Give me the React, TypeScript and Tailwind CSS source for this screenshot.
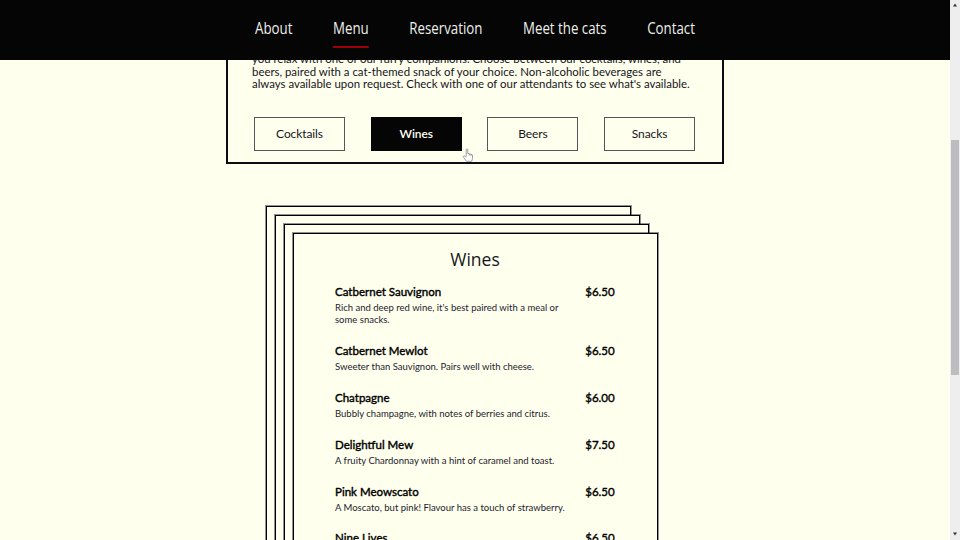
const NAV = ['About', 'Menu', 'Reservation', 'Meet the cats', 'Contact'];
const TABS = ['Cocktails', 'Wines', 'Beers', 'Snacks'];

const WINES = [
  { name: 'Catbernet Sauvignon', price: '$6.50', lines: ["Rich and deep red wine, it's best paired with a meal or", 'some snacks.'] },
  { name: 'Catbernet Mewlot', price: '$6.50', lines: ['Sweeter than Sauvignon. Pairs well with cheese.'] },
  { name: 'Chatpagne', price: '$6.00', lines: ['Bubbly champagne, with notes of berries and citrus.'] },
  { name: 'Delightful Mew', price: '$7.50', lines: ['A fruity Chardonnay with a hint of caramel and toast.'] },
  { name: 'Pink Meowscato', price: '$6.50', lines: ['A Moscato, but pink! Flavour has a touch of strawberry.'] },
  { name: 'Nine Lives', price: '$6.50', lines: [] },
];

function Header() {
  return (
    <header className="absolute left-0 top-0 z-10 flex h-[60px] w-[950px] justify-center bg-[#050505]">
      <nav className="flex w-[530px] shrink-0 scale-x-83 justify-between font-['Open_Sans','Noto_Sans',sans-serif] text-[16px] text-[#efefeb]">
        {NAV.map((item) => (
          <a
            key={item}
            className={`mt-[16px] h-[32px] whitespace-nowrap leading-[24px] ${item === 'Menu' ? 'border-b-2 border-[#9c0009]' : ''}`}
          >
            {item}
          </a>
        ))}
      </nav>
    </header>
  );
}

function Intro() {
  return (
    <section className="ml-[226px] h-[164px] w-[498px] border-2 border-t-0 border-[#0c0c14] pl-[24px] pt-[53px]">
      <p className="origin-left scale-x-95 whitespace-nowrap text-[12px] leading-[12.7px]">
        you relax with one of our furry companions. Choose between our cocktails, wines, and
        <br />
        beers, paired with a cat-themed snack of your choice. Non-alcoholic beverages are
        <br />
        always available upon request. Check with one of our attendants to see what's available.
      </p>
      <div className="ml-[2px] mt-[26px] flex gap-[25.7px]">
        {TABS.map((tab) => (
          <button
            key={tab}
            className={`h-[34px] w-[91px] border text-[12px] leading-[32px] tracking-[-0.1px] ${
              tab === 'Wines' ? 'border-[#050505] bg-[#050505] font-semibold text-[#fffff0]' : 'border-[#55555c]'
            }`}
          >
            {tab}
          </button>
        ))}
      </div>
    </section>
  );
}

function Sheet({ className }: { className: string }) {
  return (
    <div
      className={`absolute h-[500px] w-[365px] border border-black bg-[#ffffee] shadow-[0_0_0_1px_rgba(12,12,40,0.45)] ${className}`}
    />
  );
}

function MenuCard() {
  return (
    <section className="relative ml-[266px] mt-[42px] w-[392px] pl-[27px] pt-[27px]">
      <Sheet className="left-0 top-0" />
      <Sheet className="left-[9px] top-[9px]" />
      <Sheet className="left-[18px] top-[18px]" />
      <div className="relative h-[500px] w-[365px] border border-black bg-[#ffffee] pl-[41px] pr-[42px] pt-[13px] shadow-[0_0_0_1px_rgba(12,12,40,0.45)]">
        <h2 className="text-center font-['Open_Sans',sans-serif] text-[17.5px] leading-[24px]">Wines</h2>
        <ul className="mt-[13.4px]">
          {WINES.map((wine) => (
            <li key={wine.name} className="mb-[18.8px]">
              <div className="flex h-[16px] justify-between text-[12px] leading-[16px] text-black [-webkit-text-stroke:0.4px_black]">
                <span className="origin-left scale-x-96">{wine.name}</span>
                <span className="origin-right scale-x-96">{wine.price}</span>
              </div>
              {wine.lines.map((line) => (
                <p key={line} className="h-[12px] whitespace-nowrap text-[9.5px] leading-[15px] text-[#22222c]">
                  {line}
                </p>
              ))}
            </li>
          ))}
        </ul>
      </div>
    </section>
  );
}

function Scrollbar() {
  return (
    <div className="absolute right-0 top-0 z-20 flex h-[540px] w-[10px] flex-col items-center bg-[#eeeeee]">
      <svg className="mt-[3px]" width="6" height="4" viewBox="0 0 6 4">
        <path d="M3 0.5 5 3.5H1Z" fill="#333" />
      </svg>
      <div className="mt-[133px] h-[235px] w-[8px] bg-[#bdbdbf]" />
      <svg className="mb-[4px] mt-auto" width="6" height="4" viewBox="0 0 6 4">
        <path d="M1 0.5H5L3 3.5Z" fill="#333" />
      </svg>
    </div>
  );
}

function Pointer() {
  return (
    <svg className="absolute left-[462px] top-[148px] z-10" width="12" height="15" viewBox="0 0 12 15">
      <path
        d="M4.2 8.5V1.8C4.2.5 5.8.5 5.8 1.8V5.5L7.5 5.8 9 6.2 10.5 7V10.5L9.7 13.3H4.5L1.5 9.2C1 8 2.2 7.5 3 8.2L4.2 9.4M7.4 5.8V7.5M9 6.2V8"
        fill="#fffffa"
        stroke="#92929e"
        strokeWidth="0.9"
        strokeLinejoin="round"
      />
    </svg>
  );
}

export default function App() {
  return (
    <div className="relative h-[540px] w-[960px] overflow-hidden bg-[#ffffee] font-['Lato',sans-serif] text-[#15151c]">
      <Header />
      <Intro />
      <MenuCard />
      <Pointer />
      <Scrollbar />
    </div>
  );
}
